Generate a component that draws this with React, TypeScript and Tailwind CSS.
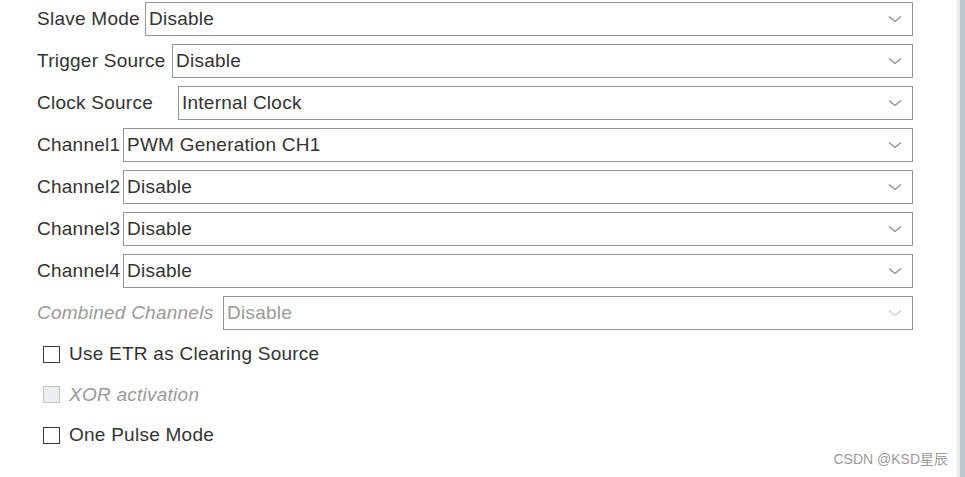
type Row = { label: string; value: string; labelW: string; disabled?: boolean };

const rows: Row[] = [
  { label: "Slave Mode", value: "Disable", labelW: "w-[108px]" },
  { label: "Trigger Source", value: "Disable", labelW: "w-[135px]" },
  { label: "Clock Source", value: "Internal Clock", labelW: "w-[141px]" },
  { label: "Channel1", value: "PWM Generation CH1", labelW: "w-[86px]" },
  { label: "Channel2", value: "Disable", labelW: "w-[86px]" },
  { label: "Channel3", value: "Disable", labelW: "w-[86px]" },
  { label: "Channel4", value: "Disable", labelW: "w-[86px]" },
  { label: "Combined Channels", value: "Disable", labelW: "w-[186px]", disabled: true },
];

const checks = [
  { label: "Use ETR as Clearing Source", disabled: false },
  { label: "XOR activation", disabled: true },
  { label: "One Pulse Mode", disabled: false },
];

function Chevron({ faded }: { faded?: boolean }) {
  return (
    <svg width="14" height="8" viewBox="0 0 14 8" className={faded ? "text-[#cfcfcf]" : "text-[#8c8c8c]"}>
      <path d="M1 1.5 L7 6.5 L13 1.5" fill="none" stroke="currentColor" strokeWidth="1.3" />
    </svg>
  );
}

function SelectRow({ row }: { row: Row }) {
  return (
    <div className="flex h-[34px] items-center">
      <span
        className={
          row.labelW +
          " shrink-0 whitespace-nowrap " +
          (row.disabled ? "italic text-[#9a9a9a]" : "text-[#333]")
        }
      >
        {row.label}
      </span>
      <div className="flex h-[34px] flex-1 items-center border border-[#8f979c] bg-white pl-[3px] pr-[10px]">
        <span className={"flex-1 whitespace-nowrap " + (row.disabled ? "text-[#9a9a9a]" : "text-[#333]")}>
          {row.value}
        </span>
        <Chevron faded={row.disabled} />
      </div>
    </div>
  );
}

export default function App() {
  return (
    <div
      className="flex h-[477px] w-[965px] bg-white text-[19px] tracking-[0.25px]"
      style={{ fontFamily: "'Liberation Sans', Arial, 'Noto Sans CJK SC', sans-serif" }}
    >
      <div className="relative flex-1">
        <div className="flex flex-col gap-[8px] pl-[37px] pr-[44px] pt-[2px]">
          {rows.map((r) => (
            <SelectRow key={r.label} row={r} />
          ))}
        </div>
        <div className="mt-[4px] flex flex-col pl-[43px]">
          {checks.map((c) => (
            <div key={c.label} className="flex h-[40.5px] items-center gap-[9px]">
              <span
                className={
                  "h-[17px] w-[17px] border " +
                  (c.disabled ? "border-[#c4c4c4] bg-[#eceef0]" : "border-[#3a3a3a] bg-white")
                }
              />
              <span className={c.disabled ? "italic text-[#9a9a9a]" : "text-[#333]"}>{c.label}</span>
            </div>
          ))}
        </div>
        <div className="absolute bottom-[7px] right-[9px] text-[14px] tracking-normal text-[#9a9a9a]">
          CSDN @KSD星辰
        </div>
      </div>
      <div className="flex w-[8px]">
        <div className="w-[3px] bg-[#e6eaec]" />
        <div className="flex-1 bg-[#bdc7cd]" />
      </div>
    </div>
  );
}
